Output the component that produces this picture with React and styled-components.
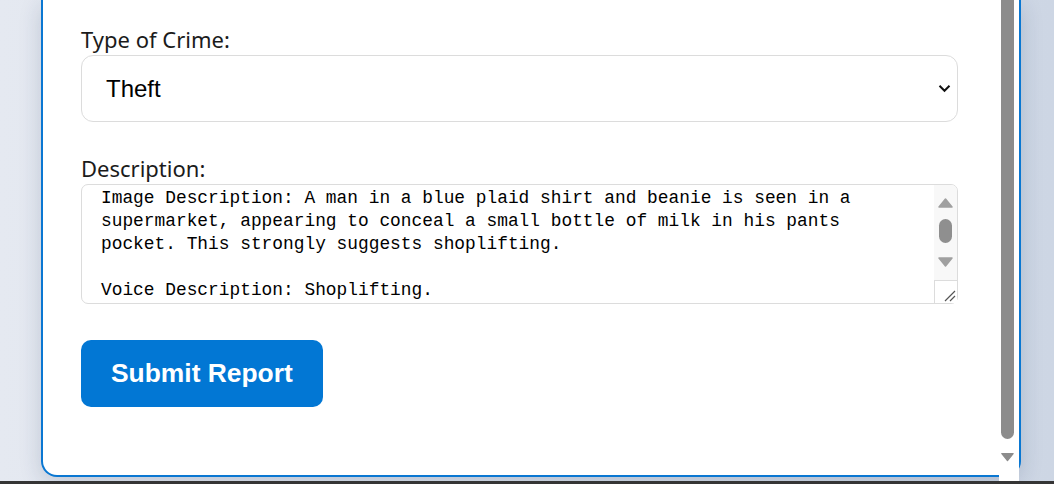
import React from "react";
import styled, { createGlobalStyle } from "styled-components";

const GlobalStyle = createGlobalStyle`
  html, body {
    margin: 0;
    padding: 0;
    overflow: hidden;
  }
  body {
    font-family: "Noto Sans", "Open Sans", sans-serif;
    background: linear-gradient(90deg, #e5e9f1 0%, #d9e0ea 50%, #cdd6e4 100%);
  }
`;

const Page = styled.div`
  position: relative;
  height: 484px;
  display: flex;
  flex-direction: column;
  padding-left: 41px;
  box-sizing: border-box;
`;

const Card = styled.div`
  width: 980px;
  height: 477px;
  box-sizing: border-box;
  background: #fff;
  border: 2px solid #0a77d2;
  border-top: none;
  border-radius: 0 0 16px 16px;
  box-shadow: 0 6px 22px rgba(30, 50, 90, 0.18);
  padding: 26px 61px 0 38px;
`;

const Field = styled.div`
  margin-bottom: ${(p) => p.$gap}px;
`;

const Label = styled.label`
  display: block;
  font-size: 22px;
  line-height: 26px;
  color: #1b1b1b;
  margin-bottom: 3px;
`;

const SelectWrap = styled.div`
  position: relative;
`;

const Select = styled.select`
  appearance: none;
  display: block;
  width: 100%;
  height: 67px;
  box-sizing: border-box;
  border: 1px solid #dcdcdc;
  border-radius: 12px;
  background: #fff;
  padding: 0 40px 0 24px;
  font-family: "Liberation Sans", Arial, sans-serif;
  font-size: 24px;
  color: #000;
  outline: none;
`;

const Chevron = styled.svg`
  position: absolute;
  right: 7px;
  top: 29px;
  pointer-events: none;
`;

const TextWrap = styled.div`
  position: relative;
`;

const TextArea = styled.textarea`
  display: block;
  width: 100%;
  height: 120px;
  box-sizing: border-box;
  border: 1px solid #dcdcdc;
  border-radius: 7px;
  padding: 2px 30px 0 19px;
  font-family: "Liberation Mono", "DejaVu Sans Mono", monospace;
  font-size: 17.85px;
  line-height: 23px;
  color: #000;
  resize: none;
  overflow: hidden;
  white-space: pre;
  outline: none;
`;

const MiniBar = styled.div`
  position: absolute;
  top: 1px;
  right: 1px;
  bottom: 1px;
  width: 23px;
  display: flex;
  flex-direction: column;
  border-top-right-radius: 6px;
  overflow: hidden;
`;

const MiniTrack = styled.div`
  flex: 1;
  background: #f8f8f8;
  display: flex;
  flex-direction: column;
  align-items: center;
  padding-top: 13px;
`;

const MiniThumb = styled.div`
  width: 13px;
  height: 24px;
  border-radius: 7px;
  background: #8f8f8f;
  margin: 11px 0 14px;
`;

const Resizer = styled.div`
  height: 22px;
  background: #fff;
  border-top: 1px solid #dcdcdc;
  border-left: 1px solid #dcdcdc;
  position: relative;
`;

const Grip = styled.svg`
  position: absolute;
  right: 1px;
  bottom: 1px;
`;

const SubmitButton = styled.button`
  margin-top: 2px;
  height: 67px;
  padding: 0 30px;
  border: none;
  border-radius: 10px;
  background: #0277d4;
  color: #fff;
  font-family: "Liberation Sans", Arial, sans-serif;
  font-weight: bold;
  font-size: 26.4px;
  cursor: pointer;
`;

const PageTrack = styled.div`
  position: absolute;
  top: 0;
  right: 35px;
  bottom: 3px;
  width: 20px;
  background: #fff;
  display: flex;
  flex-direction: column;
  align-items: flex-start;
  padding-left: 2px;
  box-sizing: border-box;
`;

const PageThumb = styled.div`
  width: 13px;
  height: 439px;
  background: #8c8c8c;
  border-radius: 0 0 7px 7px;
  margin-bottom: 13px;
`;

const BottomEdge = styled.div`
  margin-top: auto;
  margin-left: -41px;
  height: 3px;
  background: #353535;
`;

const Arrow = ({ up, w = 15, h = 10, color = "#a0a0a0" }) => (
  <svg width={w} height={h} viewBox="0 0 15 10">
    <path
      d={up ? "M7.5 1 L14 9 L1 9 Z" : "M1 1 L14 1 L7.5 9 Z"}
      fill={color}
      stroke={color}
      strokeLinejoin="round"
      strokeWidth="1.5"
    />
  </svg>
);

const description = [
  "Image Description: A man in a blue plaid shirt and beanie is seen in a",
  "supermarket, appearing to conceal a small bottle of milk in his pants",
  "pocket. This strongly suggests shoplifting.",
  "",
  "Voice Description: Shoplifting.",
].join("\n");

export default function App() {
  return (
    <>
      <GlobalStyle />
      <Page>
        <Card>
          <Field $gap={33}>
            <Label htmlFor="crime">Type of Crime:</Label>
            <SelectWrap>
              <Select id="crime" defaultValue="theft">
                <option value="theft">Theft</option>
                <option value="assault">Assault</option>
                <option value="vandalism">Vandalism</option>
                <option value="other">Other</option>
              </Select>
              <Chevron width="13" height="9" viewBox="0 0 13 9">
                <path d="M1.5 1.8 L6.5 6.8 L11.5 1.8" fill="none" stroke="#111" strokeWidth="2" />
              </Chevron>
            </SelectWrap>
          </Field>
          <Field $gap={34}>
            <Label htmlFor="desc">Description:</Label>
            <TextWrap>
              <TextArea id="desc" defaultValue={description} wrap="off" />
              <MiniBar>
                <MiniTrack>
                  <Arrow up />
                  <MiniThumb />
                  <Arrow />
                </MiniTrack>
                <Resizer>
                  <Grip width="14" height="14" viewBox="0 0 14 14">
                    <path d="M3 13 L13 3 M8 13 L13 8" stroke="#555" strokeWidth="1.2" />
                  </Grip>
                </Resizer>
              </MiniBar>
            </TextWrap>
          </Field>
          <SubmitButton type="button">Submit Report</SubmitButton>
        </Card>
        <PageTrack>
          <PageThumb />
          <Arrow w={13} h={10} color="#8c8c8c" />
        </PageTrack>
        <BottomEdge />
      </Page>
    </>
  );
}
